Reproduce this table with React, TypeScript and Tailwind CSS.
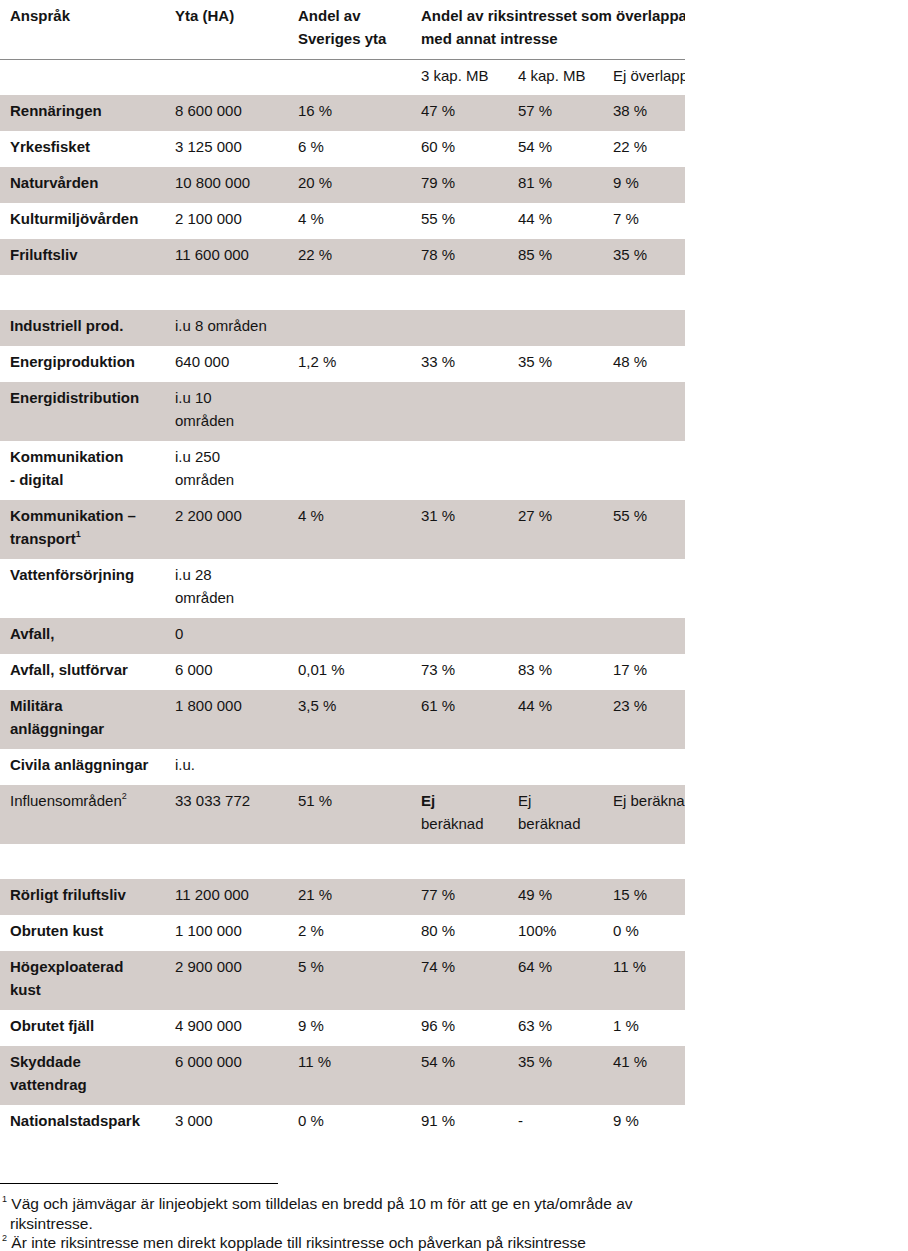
import type { ReactNode } from 'react'

type Row = {
    label: ReactNode
    plain?: boolean
    cells: ReactNode[]
}

const sup = (n: string) => <sup className="relative -top-[1px] align-super text-[9px] leading-none">{n}</sup>

const groups: Row[][] = [
    [
        { label: 'Rennäringen', cells: ['8 600 000', '16 %', '47 %', '57 %', '38 %'] },
        { label: 'Yrkesfisket', cells: ['3 125 000', '6 %', '60 %', '54 %', '22 %'] },
        { label: 'Naturvården', cells: ['10 800 000', '20 %', '79 %', '81 %', '9 %'] },
        { label: 'Kulturmiljövården', cells: ['2 100 000', '4 %', '55 %', '44 %', '7 %'] },
        { label: 'Friluftsliv', cells: ['11 600 000', '22 %', '78 %', '85 %', '35 %'] },
    ],
    [
        { label: 'Industriell prod.', cells: ['i.u 8 områden', '', '', '', ''] },
        { label: 'Energiproduktion', cells: ['640 000', '1,2  %', '33 %', '35 %', '48 %'] },
        { label: 'Energidistribution', cells: [<>i.u 10<br />områden</>, '', '', '', ''] },
        { label: <>Kommunikation<br />- digital</>, cells: [<>i.u 250<br />områden</>, '', '', '', ''] },
        {
            label: <>Kommunikation –<br />transport{sup('1')}</>,
            cells: ['2 200 000', '4 %', '31 %', '27 %', '55 %'],
        },
        { label: 'Vattenförsörjning', cells: [<>i.u 28<br />områden</>, '', '', '', ''] },
        { label: 'Avfall,', cells: ['0', '', '', '', ''] },
        { label: 'Avfall, slutförvar', cells: ['6 000', '0,01 %', '73 %', '83 %', '17 %'] },
        { label: <>Militära<br />anläggningar</>, cells: ['1 800 000', '3,5 %', '61 %', '44 %', '23 %'] },
        { label: 'Civila anläggningar', cells: ['i.u.', '', '', '', ''] },
        {
            label: <>Influensområden{sup('2')}</>,
            plain: true,
            cells: [
                '33 033 772',
                '51 %',
                <><span className="font-bold">Ej</span><br />beräknad</>,
                <>Ej<br />beräknad</>,
                'Ej beräknad',
            ],
        },
    ],
    [
        { label: 'Rörligt friluftsliv', cells: ['11 200 000', '21 %', '77 %', '49 %', '15 %'] },
        { label: 'Obruten kust', cells: ['1 100 000', '2 %', '80 %', '100%', '0 %'] },
        { label: <>Högexploaterad<br />kust</>, cells: ['2 900 000', '5 %', '74 %', '64 %', '11 %'] },
        { label: 'Obrutet fjäll', cells: ['4 900 000', '9 %', '96 %', '63 %', '1 %'] },
        { label: <>Skyddade<br />vattendrag</>, cells: ['6 000 000', '11 %', '54 %', '35 %', '41 %'] },
        { label: 'Nationalstadspark', cells: ['3 000', '0 %', '91 %', '-', '9 %'] },
    ],
]

const cell = 'whitespace-nowrap px-[10px] pt-[4px] pb-[9px] align-top leading-[23px]'
const subCell = 'whitespace-nowrap px-[10px] pt-[4px] pb-[8px] align-top leading-[23px]'

function DataRow({ row, shaded }: { row: Row; shaded: boolean }) {
    return (
        <tr className={shaded ? 'bg-[#d4cdca]' : 'bg-white'}>
            <td className={`${cell} ${row.plain ? 'font-normal' : 'font-bold'}`}>{row.label}</td>
            {row.cells.map((c, i) => (
                <td key={i} className={cell}>
                    {c}
                </td>
            ))}
        </tr>
    )
}

function GapRow() {
    return (
        <tr className="bg-white">
            <td colSpan={6} className="h-[35px]" />
        </tr>
    )
}

export default function App() {
    return (
        <div className="min-h-[1251px] w-[908px] bg-white text-[#141414] [font-family:'Liberation_Sans',Arial,sans-serif]">
            <div className="w-[685px] overflow-hidden">
                <table className="w-[713px] table-fixed border-collapse text-left text-[15px]">
                    <colgroup>
                        <col className="w-[165px]" />
                        <col className="w-[123px]" />
                        <col className="w-[123px]" />
                        <col className="w-[97px]" />
                        <col className="w-[95px]" />
                        <col className="w-[110px]" />
                    </colgroup>
                    <thead>
                        <tr className="border-b border-[#8a8a8a]">
                            <th className="px-[10px] pt-[4px] pb-[9px] align-top font-bold leading-[23px]">Anspråk</th>
                            <th className="px-[10px] pt-[4px] pb-[9px] align-top font-bold leading-[23px]">Yta (HA)</th>
                            <th className="whitespace-nowrap px-[10px] pt-[4px] pb-[9px] align-top font-bold leading-[23px]">
                                Andel av
                                <br />
                                Sveriges yta
                            </th>
                            <th
                                colSpan={3}
                                className="whitespace-nowrap px-[10px] pt-[4px] pb-[9px] align-top font-bold leading-[23px]"
                            >
                                Andel av riksintresset som överlappar
                                <br />
                                med annat intresse
                            </th>
                        </tr>
                    </thead>
                    <tbody>
                        <tr className="bg-white">
                            <td className={subCell} />
                            <td className={subCell} />
                            <td className={subCell} />
                            <td className={subCell}>3 kap. MB</td>
                            <td className={subCell}>4 kap. MB</td>
                            <td className={subCell}>Ej överlappar</td>
                        </tr>
                        {groups.map((g, gi) => (
                            <>
                                {gi > 0 && <GapRow key={`gap-${gi}`} />}
                                {g.map((row, ri) => (
                                    <DataRow key={`${gi}-${ri}`} row={row} shaded={ri % 2 === 0} />
                                ))}
                            </>
                        ))}
                    </tbody>
                </table>
            </div>

            <div className="mt-[42px] w-[278px] border-t border-black" />
            <div className="mt-[10px] w-[660px] pl-[10px] text-[15.5px] leading-[19.5px]">
                <p className="-indent-[8px]">
                    {sup('1')} Väg och jämvägar är linjeobjekt som tilldelas en bredd på 10 m för att ge en yta/område av
                    riksintresse.
                </p>
                <p className="-indent-[8px]">
                    {sup('2')} Är inte riksintresse men direkt kopplade till riksintresse och påverkan på riksintresse
                </p>
            </div>
        </div>
    )
}
